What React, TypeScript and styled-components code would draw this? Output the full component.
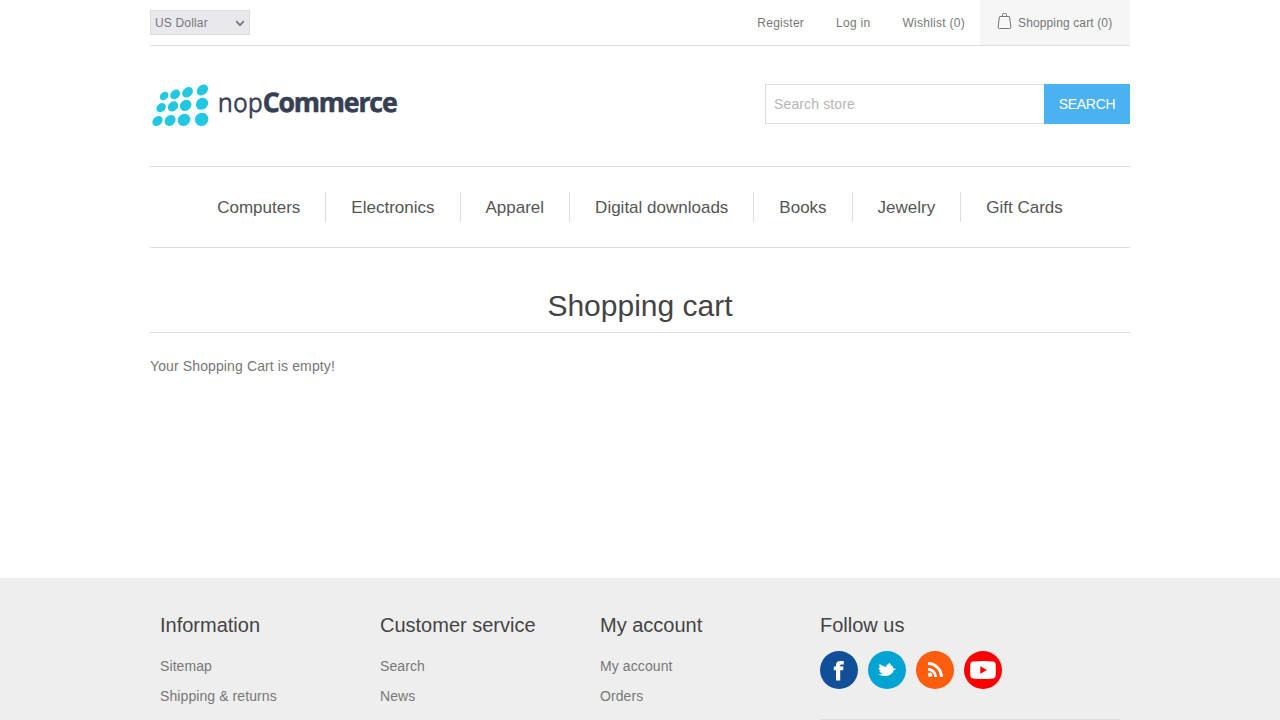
import React from "react";
import styled, { createGlobalStyle } from "styled-components";

const GlobalStyle = createGlobalStyle`
  * { margin: 0; padding: 0; box-sizing: border-box; }
  body {
    background: #fff;
    color: #777;
    font: normal 14px "Liberation Sans", Arial, Helvetica, sans-serif;
    overflow: hidden;
  }
  ul { list-style: none; }
  a { color: inherit; text-decoration: none; }
  button, input, select { font-family: inherit; outline: none; border-radius: 0; }
`;

const Page = styled.div`
  height: 720px;
  overflow: hidden;
  display: flex;
  flex-direction: column;
`;
const Container = styled.div`
  width: 980px;
  margin: 0 auto;
`;
const TopBar = styled.div`
  height: 46px;
  border-bottom: 1px solid #ddd;
  display: flex;
  justify-content: space-between;
  font-size: 12px;
`;
const CurrencyBox = styled.label`
  display: grid;
  width: 100px;
  height: 25px;
  margin-top: 10px;
  > * { grid-area: 1 / 1; }
  svg {
    width: 10px;
    height: 7px;
    place-self: center end;
    margin: 1px 5px 0 0;
    pointer-events: none;
  }
`;
const Currency = styled.select`
  appearance: none;
  width: 100px;
  height: 25px;
  padding: 1px 4px 0;
  border: 1px solid #ddd;
  background-color: #e9e9ed;
  color: #777;
  font-size: 12px;
  letter-spacing: 0.17px;
`;
const HeaderLinks = styled.ul`
  display: flex;
  line-height: 47px;
  letter-spacing: 0.27px;
`;
const HeaderLink = styled.li`
  height: 45px;
  margin-left: 32px;
`;
const CartLink = styled.li`
  width: 150px;
  height: 45px;
  margin-left: 15px;
  padding-left: 17px;
  background: #f6f6f6;
  display: flex;
  letter-spacing: 0.13px;
  svg { width: 15px; height: 18px; margin: 12px 6px 0 0; flex: none; }
`;
const Header = styled.header`
  height: 120px;
  display: flex;
  justify-content: space-between;
`;
const Logo = styled.svg`
  width: 250px;
  height: 60px;
  margin-top: 29px;
  overflow: visible;
`;
const SearchForm = styled.form`
  display: flex;
  margin-top: 38px;
  height: 40px;
`;
const SearchInput = styled.input`
  width: 279px;
  height: 40px;
  border: 1px solid #ddd;
  border-right: 0;
  padding: 0 8px;
  font-size: 14px;
  letter-spacing: 0.13px;
  color: #777;
  &::placeholder { color: #b6b6b6; opacity: 1; }
`;
const SearchButton = styled.button`
  width: 86px;
  height: 40px;
  border: 0;
  background: #4ab2f1;
  color: #fff;
  font-size: 14px;
  letter-spacing: -0.3px;
`;
const Menu = styled.ul`
  height: 82px;
  border-top: 1px solid #ddd;
  border-bottom: 1px solid #ddd;
  display: flex;
  justify-content: center;
  align-items: center;
`;
const MenuItem = styled.li`
  height: 30px;
  padding: 0 25px;
  line-height: 32px;
  font-size: 17px;
  color: #555;
  & + & { border-left: 1px solid #ddd; }
`;
const Main = styled.main`
  height: 330px;
`;
const Title = styled.h1`
  height: 85px;
  padding-top: 41px;
  border-bottom: 1px solid #ddd;
  text-align: center;
  font-size: 30px;
  line-height: 34px;
  font-weight: normal;
  color: #444;
`;
const EmptyMessage = styled.p`
  padding-top: 25px;
  line-height: 16px;
  letter-spacing: 0.12px;
`;
const Footer = styled.footer`
  flex: 1;
  background: #eee;
`;
const FooterColumns = styled(Container)`
  display: flex;
  padding: 36px 10px 0;
`;
const Column = styled.div<{ $width: number }>`
  width: ${(p) => p.$width}px;
  flex: none;
`;
const ColumnTitle = styled.h2`
  font-size: 20px;
  line-height: 23px;
  font-weight: normal;
  color: #444;
`;
const LinkList = styled.ul`
  padding-top: 14px;
  line-height: 30px;
  letter-spacing: 0.09px;
`;
const Socials = styled.ul`
  display: flex;
  gap: 10px;
  height: 83px;
  padding-top: 14px;
  border-bottom: 1px solid #ddd;
  svg { display: block; }
`;

const menu = ["Computers", "Electronics", "Apparel", "Digital downloads", "Books", "Jewelry", "Gift Cards"];
const columns = [
  { title: "Information", links: ["Sitemap", "Shipping & returns"] },
  { title: "Customer service", links: ["Search", "News"] },
  { title: "My account", links: ["My account", "Orders"] },
];

// cx, cy, rx, ry of every dot in the logo mark
const dots = [
  [14.1, 21, 4.8, 3.7], [25.2, 19.4, 5.5, 4.3], [37.500, 17.3, 5.9, 4.6], [52.4, 15, 6.2, 4.8],
  [11.1, 32.7, 5.2, 4.1], [23, 31.4, 5.6, 4.6], [35.700, 30.400, 6.1, 5.2], [52, 28.800, 6.500, 5.7],
  [7.5, 46, 5.7, 4.4], [20.1, 45.500, 5.9, 5], [34, 44.900, 6.600, 5.9], [51.700, 44.4, 6.9, 6.5],
];

const social = [
  {
    name: "Facebook",
    color: "#124f99",
    icon: <path fill="#fff" d="M16 29.500V19.300H13.800V15.600H16V14c0-2.800 1.600-4 4.200-4h3.500v3.500h-2.200c-1 0-1.300.5-1.300 1.300v.8h3.300l-.4 3.700h-2.900V29.500z" />,
  },
  {
    name: "Twitter",
    color: "#00a4d3",
    icon: <path fill="#fff" d="M10 23.100c1.700.4 3.200.1 4.500-.7-1.700-.3-2.700-1.100-3.100-2.400h1.500c-1.600-.8-2.300-2-2.300-3.400.6.300 1.100.4 1.600.4-.9-.9-1.100-2.300-.5-4.200 1.700 1.700 3.700 2.700 6.100 3.100.6-1.600 1.800-2.700 4.200-4.100l-.1 1.300 1.500-.3-.8 1.200c1.400.7 2.300 1.900 2.600 3.200l3.300.9-2.600 1c-1.300 3.700-4 5.900-8.100 5.900-3 .1-5.700-.4-7.800-1.900z" />,
  },
  {
    name: "RSS",
    color: "#ff5d0e",
    icon: (
      <g fill="none" stroke="#fff">
        <circle cx="14.100" cy="23.700" r="2.200" fill="#fff" stroke="none" />
        <path strokeWidth="2.900" d="M12 18.200a7.600 7.600 0 0 1 7.600 7.700" />
        <path strokeWidth="3" d="M12 12.600a13.300 13.300 0 0 1 13.400 13.300" />
      </g>
    ),
  },
  {
    name: "YouTube",
    color: "#f00",
    icon: (
      <g>
        <path fill="#fff" d="M9.200 10.500Q19 9.500 28.800 10.500Q31.500 10.800 31.700 14Q32 19 31.700 24Q31.500 27.200 28.800 27.500Q19 28.500 9.200 27.500Q6.500 27.200 6.300 24Q6 19 6.300 14Q6.500 10.800 9.200 10.500z" />
        <path fill="#f00" d="M16.300 15.300v7.400L23 19z" />
      </g>
    ),
  },
];

export default function App() {
  return (
    <Page>
      <GlobalStyle />
      <Container>
        <TopBar>
          <CurrencyBox>
            <Currency defaultValue="US Dollar" aria-label="Currency">
              <option>US Dollar</option>
              <option>Euro</option>
            </Currency>
            <svg viewBox="0 0 10 7" fill="none" stroke="#777" strokeWidth="1.700">
              <path d="M1.200 1.200L5 5.200L8.800 1.200" />
            </svg>
          </CurrencyBox>
          <HeaderLinks>
            <HeaderLink><a href="#">Register</a></HeaderLink>
            <HeaderLink><a href="#">Log in</a></HeaderLink>
            <HeaderLink><a href="#">Wishlist (0)</a></HeaderLink>
            <CartLink>
              <svg viewBox="0 0 15 18" fill="none" stroke="#777">
                <path d="M3 4.500h9q.5 0 .6.6l1.300 10.100q.1 1.300-1.200 1.300H2.300Q1 16.500 1.100 15.200L2.400 5.100Q2.500 4.500 3 4.500z" />
                <path d="M5.500 4.500V2.500Q5.500 1.500 6.500 1.500H8.500Q9.500 1.500 9.500 2.500V4.500" />
              </svg>
              <a href="#">Shopping cart (0)</a>
            </CartLink>
          </HeaderLinks>
        </TopBar>
        <Header>
          <Logo viewBox="0 0 250 60" role="img" aria-label="nopCommerce">
            {dots.map(([cx, cy, rx, ry]) => (
              <ellipse key={`${cx}-${cy}`} cx={cx} cy={cy} rx={rx} ry={ry} fill="#22c7e2" transform={`rotate(-42 ${cx} ${cy})`} />
            ))}
            <g fill="#363f54" fontFamily="'Open Sans', 'Noto Sans', sans-serif" textRendering="geometricPrecision">
              <text x="67.800" y="37.400" fontSize="26.500" stroke="#363f54" strokeWidth="0.300" textLength="45" lengthAdjust="spacingAndGlyphs">nop</text>
              <text x="112.700" y="37.400" fontSize="27" fontWeight="700" stroke="#363f54" strokeWidth="0.600" letterSpacing="-1.200" textLength="133.800" lengthAdjust="spacingAndGlyphs">Commerce</text>
            </g>
          </Logo>
          <SearchForm>
            <SearchInput placeholder="Search store" />
            <SearchButton type="button">SEARCH</SearchButton>
          </SearchForm>
        </Header>
        <Menu>
          {menu.map((m) => <MenuItem key={m}><a href="#">{m}</a></MenuItem>)}
        </Menu>
        <Main>
          <Title>Shopping cart</Title>
          <EmptyMessage>Your Shopping Cart is empty!</EmptyMessage>
        </Main>
      </Container>
      <Footer>
        <FooterColumns>
          {columns.map((c) => (
            <Column key={c.title} $width={220}>
              <ColumnTitle>{c.title}</ColumnTitle>
              <LinkList>{c.links.map((l) => <li key={l}><a href="#">{l}</a></li>)}</LinkList>
            </Column>
          ))}
          <Column $width={300}>
            <ColumnTitle>Follow us</ColumnTitle>
            <Socials>
              {social.map((s) => (
                <li key={s.name}>
                  <svg width="38" height="38" viewBox="0 0 38 38" aria-label={s.name}>
                    <circle cx="19" cy="19" r="19" fill={s.color} />
                    {s.icon}
                  </svg>
                </li>
              ))}
            </Socials>
          </Column>
        </FooterColumns>
      </Footer>
    </Page>
  );
}
